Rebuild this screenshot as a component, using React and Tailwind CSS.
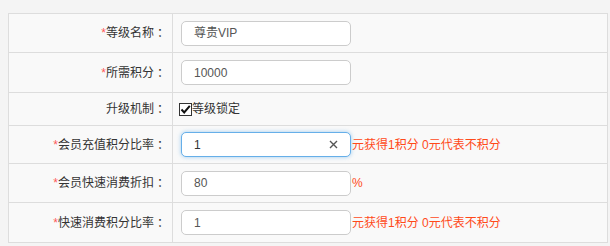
import React from "react";

const font = { fontFamily: '"Liberation Sans", "Noto Sans CJK SC", sans-serif' };
const colonFont = { fontFamily: '"Noto Sans CJK TC", sans-serif' };

function Label({ req, children }) {
  return (
    <div className="w-[164px] shrink-0 border-r border-[#dddddd] flex items-center justify-end pr-[6px] text-[12px] text-[#333333]">
      {req && <span className="text-[#ff5a5a]">*</span>}
      <span>{children}</span>
      <span style={colonFont}>：</span>
    </div>
  );
}

function Input({ value, focused }) {
  return (
    <div
      className={
        "w-[170px] h-[25px] rounded-[5px] bg-white border flex items-center pl-[12px] pr-[10px] text-[12px] " +
        (focused
          ? "border-[#66afe9] shadow-[0_0_4px_rgba(102,175,233,0.6)] text-[#333333]"
          : "border-[#cccccc] text-[#555555]")
      }
    >
      <span className="flex-1">{value}</span>
      {focused && (
        <svg width="9" height="9" viewBox="0 0 9 9" className="mr-[2px]">
          <path d="M1 1 L8 8 M8 1 L1 8" stroke="#555" strokeWidth="1.4" />
        </svg>
      )}
    </div>
  );
}

function Row({ h, label, req, children }) {
  return (
    <div className="flex border-b border-[#dddddd]" style={{ height: h }}>
      <Label req={req}>{label}</Label>
      <div className="flex-1 flex items-center pl-[8px]">{children}</div>
    </div>
  );
}

const Hint = ({ children }) => (
  <span className="ml-[1px] text-[12px] text-[#ff4a1a]">{children}</span>
);

export default function App() {
  return (
    <div className="w-[610px] h-[246px] bg-[#f4f4f4] pt-[13px] pl-[8px] overflow-hidden" style={font}>
      <div className="w-[600px] border border-[#dddddd] border-b-0 bg-[#f9f9f9]">
        <Row h={39} label="等级名称" req>
          <Input value="尊贵VIP" />
        </Row>
        <Row h={40} label="所需积分" req>
          <Input value="10000" />
        </Row>
        <Row h={33} label="升级机制">
          <div className="flex items-center text-[12px] text-[#333333] -ml-[2px]">
            <span className="w-[13px] h-[13px] border border-[#333333] bg-white flex items-center justify-center">
              <svg width="11" height="11" viewBox="0 0 11 11">
                <path d="M1.5 5.5 L4.2 8.5 L9.8 1.8" fill="none" stroke="#111" strokeWidth="2" />
              </svg>
            </span>
            <span>等级锁定</span>
          </div>
        </Row>
        <Row h={38} label="会员充值积分比率" req>
          <Input value="1" focused />
          <Hint>元获得1积分 0元代表不积分</Hint>
        </Row>
        <Row h={39} label="会员快速消费折扣" req>
          <Input value="80" />
          <Hint>%</Hint>
        </Row>
        <Row h={40} label="快速消费积分比率" req>
          <Input value="1" />
          <Hint>元获得1积分 0元代表不积分</Hint>
        </Row>
      </div>
    </div>
  );
}
